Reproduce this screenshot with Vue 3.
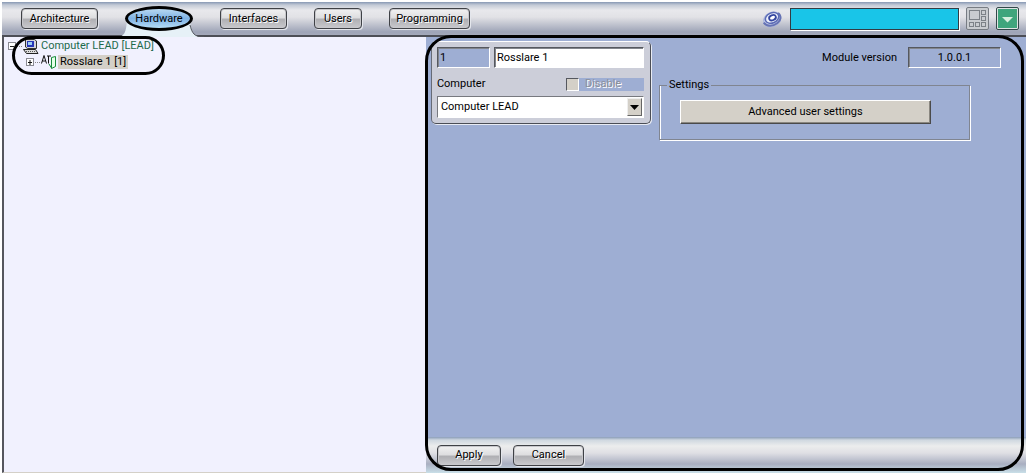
<script setup>
import { ref } from 'vue'

const tabs = [
  { name: 'Architecture', cls: 'w-arch' },
  { name: 'Hardware', cls: 'w-hard' },
  { name: 'Interfaces', cls: 'w-int' },
  { name: 'Users', cls: 'w-users' },
  { name: 'Programming', cls: 'w-prog' }
]
const active = ref('Hardware')
const display = ref('')
const moduleId = ref('1')
const moduleName = ref('Rosslare 1')
const computer = ref('Computer LEAD')
const disabled = ref(false)
const version = ref('1.0.0.1')
</script>

<template>
  <div class="window">
    <header class="bar top">
      <nav class="tabs">
        <div v-for="t in tabs" :key="t.name" class="tab" :class="[t.cls, { active: active === t.name }]">
          <svg v-if="active === t.name" class="tab-shape" width="96" height="18" viewBox="0 0 96 18" aria-hidden="true">
            <path d="M2 18C12 17 13 12 14 0H77C78 12 80 17 92 18Z" fill="#e6f1f7" />
            <path d="M77 5C79 13 81 17 91 17" fill="none" stroke="#55585f" />
          </svg>
          <button type="button" class="pill" @click="active = t.name">{{ t.name }}</button>
        </div>
      </nav>
      <div class="tools">
        <svg class="logo" width="21" height="20" viewBox="0 0 21 20" aria-hidden="true">
          <g transform="rotate(-24 10 10)" fill="none">
            <ellipse cx="10" cy="10.5" rx="9" ry="7" fill="#c3cbea" stroke="#a9b4dc" />
            <path d="M1 10C2 15 8 17 13 16C18 15 20 11 18 7" stroke="#6673b4" stroke-width="2" />
            <ellipse cx="10.5" cy="9" rx="7" ry="5" fill="#eef1fb" stroke="#5b6bb5" stroke-width="1.5" />
            <ellipse cx="11" cy="9" rx="3.5" ry="2.5" fill="#fff" stroke="#3446a0" stroke-width="1.8" />
          </g>
        </svg>
        <input v-model="display" class="display" type="text" aria-label="Display" />
        <button type="button" class="tool" aria-label="Layout">
          <svg width="21" height="21" viewBox="0 0 21 21" fill="#c9ccd0" stroke="#7c8187">
            <rect x="2.5" y="2.5" width="10" height="9" />
            <rect x="14.5" y="2.5" width="4" height="4" />
            <rect x="14.5" y="8.5" width="4" height="4" />
            <rect x="2.5" y="14.5" width="4" height="4" />
            <rect x="8.5" y="14.5" width="4" height="4" />
            <rect x="14.5" y="14.5" width="4" height="4" />
          </svg>
        </button>
        <button type="button" class="tool green" aria-label="Menu">
          <svg width="19" height="19" viewBox="0 0 19 19"><rect width="19" height="19" fill="#3fa57c" /><path d="M4 8H15L9.5 13.5Z" fill="#d8efdf" /></svg>
        </button>
      </div>
    </header>

    <div class="body">
      <aside class="tree">
        <ul>
          <li class="node">
            <svg class="twig" width="15" height="16" viewBox="0 0 15 16" aria-hidden="true">
              <rect x="0.5" y="4.5" width="7" height="7" fill="#fff" stroke="#8a8a92" />
              <path d="M2 8.5H6" stroke="#222" />
              <path d="M9 8.5H15" stroke="#888" stroke-dasharray="1 1" />
            </svg>
            <svg class="pc" width="16" height="16" viewBox="0 0 16 16" aria-hidden="true">
              <path d="M2.5 1.5H11.5L13.5 3V10.5H4.5L2.5 9Z" fill="#d4d4dc" stroke="#333" />
              <path d="M4 3H11V9H4Z" fill="#2636b8" />
              <path d="M5 4H9V7H5Z" fill="#9ccdf2" />
              <path d="M0.5 11.5H12.5L15 15.5H3.5Z" fill="#dcdcdc" stroke="#222" />
              <path d="M3 13.5H13" stroke="#555" stroke-dasharray="1 1" />
            </svg>
            <span class="root">Computer LEAD [LEAD]</span>
          </li>
          <li class="node child">
            <svg class="twig" width="15" height="16" viewBox="0 0 15 16" aria-hidden="true">
              <rect x="0.5" y="4.5" width="7" height="7" fill="#fff" stroke="#8a8a92" />
              <path d="M2 8.5H6M4 6V11" stroke="#111" />
              <path d="M9 8.5H15" stroke="#888" stroke-dasharray="1 1" />
            </svg>
            <svg class="dev" width="16" height="16" viewBox="0 0 16 16" aria-hidden="true">
              <path d="M0.5 9.5L3 1.5L5.5 9.5M1.5 7H4.5M6 2H10M7.5 2V9.5" fill="none" stroke="#111" />
              <path d="M10.5 3.5L14.500 2.5V12.5L10.5 14.5Z" fill="#e5ffe9" stroke="#168a3a" />
              <path d="M8 10L10.5 14" stroke="#168a3a" />
            </svg>
            <span class="leaf">Rosslare 1 [1]</span>
          </li>
        </ul>
        <div class="ring tree-ring"></div>
      </aside>

      <main class="panel">
        <div class="content">
          <form class="card" @submit.prevent>
            <div class="row">
              <input v-model="moduleId" class="field id" type="text" aria-label="Module number" />
              <input v-model="moduleName" class="field name" type="text" aria-label="Module name" />
            </div>
            <div class="row mid">
              <label for="computer">Computer</label>
              <label class="disable"><input v-model="disabled" type="checkbox" /><span>Disable</span></label>
            </div>
            <div class="combo">
              <select id="computer" v-model="computer"><option>Computer LEAD</option></select>
              <span class="drop" aria-hidden="true"><svg width="9" height="5" viewBox="0 0 9 5"><path d="M0 0H9L4.5 5Z" /></svg></span>
            </div>
          </form>
          <section class="details">
            <div class="version">
              <label for="version">Module version</label>
              <input id="version" v-model="version" class="field" type="text" readonly />
            </div>
            <fieldset>
              <legend>Settings</legend>
              <button type="button" class="classic">Advanced user settings</button>
            </fieldset>
          </section>
        </div>
        <footer class="bar bottom">
          <button type="button" class="pill">Apply</button>
          <button type="button" class="pill wide">Cancel</button>
        </footer>
        <div class="ring panel-ring"></div>
      </main>
    </div>
  </div>
</template>

<style>
body {
  margin: 0;
  background: #fff;
}
</style>

<style scoped>
* {
  box-sizing: border-box;
}

.window {
  display: flex;
  flex-direction: column;
  min-height: 100vh;
  padding: 2px;
  font: 11px/14px Roboto, "Liberation Sans", Arial, sans-serif;
  color: #000;
}

button,
input,
select {
  margin: 0;
  font: inherit;
  color: inherit;
}

.bar {
  display: flex;
  align-items: center;
}

.top {
  justify-content: space-between;
  height: 35px;
  padding: 0 7px 0 19px;
  border-bottom: 2px solid #4c4e56;
  background: linear-gradient(#8798b4 0, #c3cad6 3px, #e8e8ec 8px, #e2e2e6 15px, #9ea4b7 30px, #a4a9ba 100%);
}

.tabs {
  display: flex;
  gap: 27px;
}

.tab {
  position: relative;
}

.tab .pill {
  position: relative;
  width: 100%;
}

.w-arch { width: 77px; }
.w-hard { width: 68px; }
.w-int { width: 67px; }
.w-users { width: 48px; }
.w-prog { width: 81px; }

.tab-shape {
  position: absolute;
  top: 12px;
  left: -12px;
}

.pill {
  height: 21px;
  padding: 0;
  border: 1px solid #3f4146;
  border-radius: 4px;
  background: linear-gradient(#f2f2f2 0, #dedee0 45%, #b0b0b4 55%, #c9c9cd 100%);
  box-shadow: inset 0 0 0 1px #c8c8cc, 1px 1px 0 #e4e6ec;
  text-shadow: 1px 1px 0 #fff;
  white-space: nowrap;
}

.tab.active .pill {
  height: 25px;
  margin: -2px 0;
  border: 3px solid #000;
  border-radius: 50%;
  background: linear-gradient(#b9d9f2, #7fb2e5 50%, #b4dcf5);
  box-shadow: none;
  text-shadow: none;
}

.tools {
  display: flex;
  align-items: center;
  gap: 7px;
}

.display {
  width: 169px;
  height: 22px;
  border: 1px solid #333c44;
  background: #19c5e8;
  box-shadow: 1px 1px 0 #fff;
}

.tool {
  display: grid;
  place-items: center;
  width: 23px;
  height: 23px;
  padding: 0;
  border: 1px solid #777c83;
  border-radius: 2px;
  background: #c9ccd0;
}

.tool.green {
  border-color: #33484a;
  background: #dde3e2;
}

.body {
  display: flex;
  flex: 1;
}

.tree {
  position: relative;
  flex: 0 0 41.4%;
  border: solid #55565e;
  border-width: 0 0 0 2px;
  border-bottom: 1px solid #d4d0c8;
  background: #f1f1fe;
}

ul {
  margin: 0;
  padding: 1px 0 0 4px;
  list-style: none;
}

.node {
  display: flex;
  align-items: center;
  height: 16px;
}

.child {
  padding-left: 18px;
}

.node span {
  padding: 0 2px;
  white-space: nowrap;
}

.root {
  color: #1d6a4c;
}

.leaf {
  margin-left: 1px;
  background: #d4d0c8;
}

.ring {
  position: absolute;
  border: 3px solid #000;
  pointer-events: none;
}

.tree-ring {
  top: -1px;
  left: 8px;
  width: 153px;
  height: 39px;
  border-radius: 20px;
}

.panel-ring {
  top: -2px;
  right: 2px;
  bottom: 2px;
  left: -1px;
  border-radius: 26px;
}

.panel {
  position: relative;
  display: flex;
  flex: 1;
  flex-direction: column;
  background: #9eaed3;
}

.content {
  display: flex;
  flex: 1;
  align-items: flex-start;
  gap: 8px;
  padding: 4px 25px 8px 5px;
}

.card {
  flex: 0 0 220px;
  min-width: 0;
  padding: 5px;
  padding-right: 6px;
  border: 1px solid;
  border-color: #fff #4a4d55 #4a4d55 #666b76;
  border-radius: 5px;
  background: #ccced9;
  box-shadow: 1px 1px 0 #e8ebf3;
}

.row {
  display: flex;
  gap: 4px;
}

.field {
  height: 21px;
  padding: 0 2px;
  border: 1px solid;
  border-color: #55585f #fff #fff #55585f;
  border-radius: 0;
  box-shadow: inset 1px 1px 0 #82858c;
}

.id {
  width: 53px;
  background: #9eaed3;
}

.name {
  flex: 1;
  min-width: 0;
  background: #fff;
}

.mid {
  align-items: center;
  justify-content: space-between;
  margin: 9px 0 5px;
}

.disable {
  display: flex;
  align-items: center;
  gap: 6px;
  width: 78px;
  height: 13px;
  background: #9eaed3;
  color: #8b8f9b;
  text-shadow: 1px 1px 0 #fff;
}

.disable input {
  appearance: none;
  width: 13px;
  height: 13px;
  border: 1px solid;
  border-color: #55585f #fff #fff #55585f;
  background: #d4d0c8;
}

.disable input:checked {
  background: #55585f;
}

.combo {
  position: relative;
  height: 22px;
  border: 1px solid;
  border-color: #77797f #fff #fff #77797f;
  background: #fff;
}

select {
  display: block;
  appearance: none;
  width: 100%;
  height: 20px;
  padding: 0 20px 0 3px;
  border: 0;
  background: #fff;
}

.drop {
  position: absolute;
  top: 1px;
  right: 1px;
  display: grid;
  place-items: center;
  width: 15px;
  height: 18px;
  border: 1px solid;
  border-color: #eee #666 #666 #eee;
  background: #d4d0c8;
  pointer-events: none;
}

.details {
  flex: 1;
}

.version {
  display: flex;
  align-items: center;
  justify-content: flex-end;
  gap: 11px;
  padding-top: 6px;
}

.version .field {
  width: 93px;
  background: #9eaed3;
  text-align: center;
}

fieldset {
  min-width: 0;
  margin: 10px 31px 0 0;
  padding: 8px 38px 15px 20px;
  border: 1px solid #808590;
  box-shadow: inset 1px 0 0 #fff, 1px 1px 0 #fff;
}

legend {
  margin-left: -13px;
  padding: 0 2px;
  background: #9eaed3;
}

.classic {
  display: block;
  width: 100%;
  height: 24px;
  border: 1px solid;
  border-color: #fff #4a4a4a #4a4a4a #fff;
  border-radius: 0;
  background: #d4d0c8;
  box-shadow: inset -1px -1px 0 #8a8780;
}

.bottom {
  gap: 12px;
  height: 36px;
  padding: 0 11px;
  background: linear-gradient(#8b9db8 0, #cfd8e0 3px, #eceded 9px, #dfdfe4 16px, #a9afc1 27px, #c9dfe8 100%);
}

.bottom .pill {
  width: 64px;
}

.bottom .wide {
  width: 71px;
}
</style>
